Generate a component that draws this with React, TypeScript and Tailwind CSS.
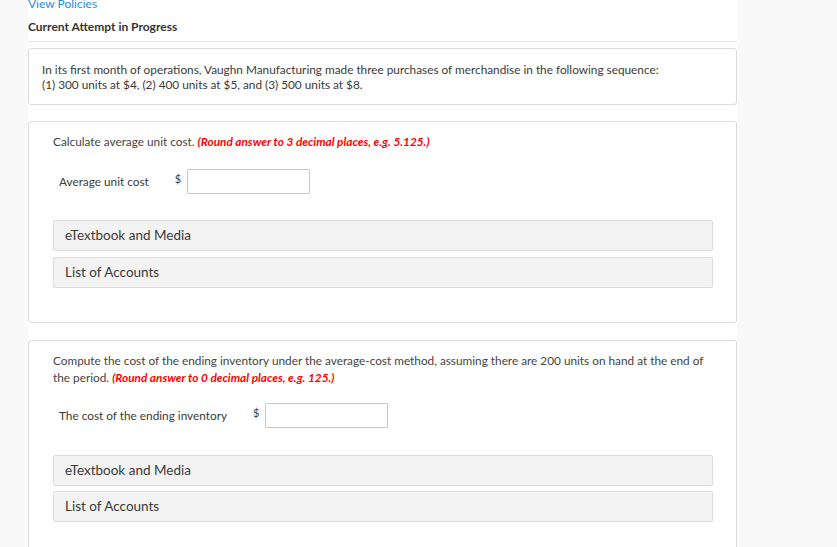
const font = { fontFamily: "Lato, 'Open Sans', sans-serif" };

function Bar({ label }: { label: string }) {
  return (
    <div className="flex h-[31px] items-center rounded-[2px] border border-[#dcdcdc] bg-[#f3f3f3] pl-[11px] text-[13.5px] text-[#3a3a3a]">
      {label}
    </div>
  );
}

function AnswerRow({ label }: { label: string }) {
  return (
    <div className="flex items-center pl-[6px] text-[11.8px] text-[#3a3a3a]">
      <span className="leading-[24px]">{label}</span>
      <span className="ml-[26px] -mt-[5px] text-[11px]">$</span>
      <input
        type="text"
        className="ml-[6px] h-[25px] w-[123px] rounded-[1px] border border-[#c8c8c8] bg-white outline-none"
      />
    </div>
  );
}

export default function App() {
  return (
    <div className="min-h-screen bg-[#f9f9f9]" style={font}>
      <div className="ml-[28px] min-h-screen w-[709px] overflow-hidden bg-white">
        <div className="-mt-[4px] text-[12px] leading-[15px] text-[#1e8ce6]">View Policies</div>
        <div className="mt-[8px] text-[12px] font-bold leading-[15px] text-[#333]">
          Current Attempt in Progress
        </div>
        <div className="mt-[7px] h-px bg-[#e6e6e6]" />

        <div className="mt-[6px] rounded-[3px] border border-[#dcdcdc] px-[13px] pb-[12px] pt-[13px] text-[11.8px] leading-[15px] text-[#3a3a3a]">
          <p>
            In its first month of operations, Vaughn Manufacturing made three purchases of merchandise in the following sequence:
          </p>
          <p>(1) 300 units at $4, (2) 400 units at $5, and (3) 500 units at $8.</p>
        </div>

        <div className="mt-[16px] rounded-[3px] border border-[#dcdcdc] pb-[34px] pl-[24px] pr-[23px] pt-[12px]">
          <p className="text-[11.8px] leading-[15px] text-[#444]">
            Calculate average unit cost.{" "}
            <span className="font-bold italic text-[#f00]">(Round answer to 3 decimal places, e.g. 5.125.)</span>
          </p>
          <div className="mt-[20px]">
            <AnswerRow label="Average unit cost" />
          </div>
          <div className="mt-[26px] flex flex-col gap-[6px]">
            <Bar label="eTextbook and Media" />
            <Bar label="List of Accounts" />
          </div>
        </div>

        <div className="mt-[17px] rounded-[3px] border border-[#dcdcdc] pb-[34px] pl-[24px] pr-[23px] pt-[11px]">
          <p className="text-[11.8px] leading-[17px] text-[#444]">
            Compute the cost of the ending inventory under the average-cost method, assuming there are 200 units on hand at the end of the period.{" "}
            <span className="font-bold italic text-[#f00]">(Round answer to 0 decimal places, e.g. 125.)</span>
          </p>
          <div className="mt-[17px]">
            <AnswerRow label="The cost of the ending inventory" />
          </div>
          <div className="mt-[27px] flex flex-col gap-[5px]">
            <Bar label="eTextbook and Media" />
            <Bar label="List of Accounts" />
          </div>
        </div>
      </div>
    </div>
  );
}
